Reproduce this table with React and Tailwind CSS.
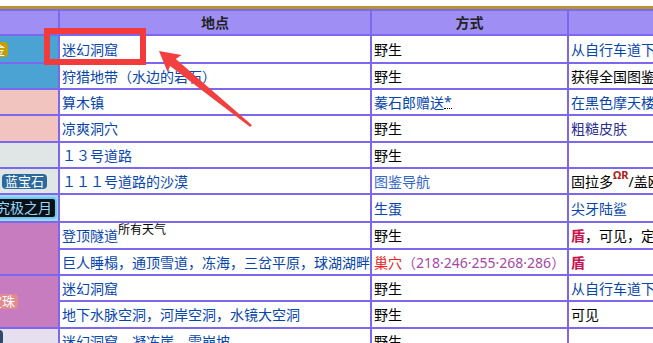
import React from "react";

// link colour used by most cells
const LINK = "text-[#0645ad]";

function Cell({ children, className = "" }) {
  return (
    <div className={`bg-white flex items-center pl-[2px] whitespace-nowrap overflow-hidden ${className}`}>
      {children}
    </div>
  );
}

// first column is cut off on the left, so content is pushed to the right edge and clipped
function Side({ className = "", children }) {
  return (
    <div className={`flex items-center justify-end overflow-hidden whitespace-nowrap ${className}`}>
      {children}
    </div>
  );
}

function Badge({ className = "", children }) {
  return (
    <span className={`shrink-0 rounded-[4px] px-[3px] text-[13px] leading-[15px] ${className}`}>
      {children}
    </span>
  );
}

export default function App() {
  return (
    <div className="relative w-[653px] h-[343px] overflow-hidden bg-white font-['Noto_Sans','Noto_Sans_CJK_SC',sans-serif] text-[14px] text-black">
      <div className="h-[6px]" />
      <div className="h-[3px] bg-[#b8942a]" />

      <div className="grid w-max grid-cols-[58px_310px_195px_220px] grid-rows-[23px_26px_24px_24px_25px_24px_24px_26px_25px_24px_24px_25px_25px] gap-[2px] pt-[2px] bg-[#7b68ee]">
        {/* header */}
        <div className="bg-[#9f8ff4]" />
        <div className="bg-[#9f8ff4] flex items-center justify-center font-bold text-[#222]">地点</div>
        <div className="bg-[#9f8ff4] flex items-center justify-center font-bold text-[#222]">方式</div>
        <div className="bg-[#9f8ff4]" />

        {/* 1 */}
        <Side className="bg-[#4aa3d2] pr-[50px]">
          <Badge className="bg-[#c2a005] text-white">白金</Badge>
        </Side>
        <Cell className={LINK}>迷幻洞窟</Cell>
        <Cell>野生</Cell>
        <Cell className={LINK}>从自行车道下方进入</Cell>

        {/* 2 */}
        <Side className="bg-[#4aa3d2]" />
        <Cell className={LINK}>狩猎地带（水边的岩石）</Cell>
        <Cell>野生</Cell>
        <Cell>获得全国图鉴后</Cell>

        {/* 3 */}
        <Side className="bg-[#f2c4c0]" />
        <Cell className={LINK}>算木镇</Cell>
        <Cell className={LINK}>
          蓁石郎赠送
          <span className="border-b border-dotted border-black leading-[13px]">*</span>
        </Cell>
        <Cell className={LINK}>在黑色摩天楼中</Cell>

        {/* 4 */}
        <Side className="bg-[#f2c4c0]" />
        <Cell className={LINK}>凉爽洞穴</Cell>
        <Cell>野生</Cell>
        <Cell className="text-[#2b2f8f]">粗糙皮肤</Cell>

        {/* 5 */}
        <Side className="bg-[#e0e6e6]" />
        <Cell className={LINK}>１３号道路</Cell>
        <Cell>野生</Cell>
        <Cell />

        {/* 6 */}
        <Side className="bg-[#e0e6e6] pr-[11px]">
          <Badge className="bg-[#2b6a9c] text-white">蓝宝石</Badge>
        </Side>
        <Cell className={LINK}>１１１号道路的沙漠</Cell>
        <Cell className="text-[#3366cc]">图鉴导航</Cell>
        <Cell>
          固拉多
          <sup className="text-[11px] font-bold text-[#b01818] -top-[6px]">ΩR</sup>
          /盖欧卡
        </Cell>

        {/* 7 */}
        <Side className="bg-[#9fd8f2] pr-[1px]">
          <span className="shrink-0 rounded-[4px] border-2 border-[#6ccbf2] bg-[#0d0f16] px-[3px] text-[14px] leading-[18px] text-[#8fd8f8]">
            究极之月
          </span>
        </Side>
        <Cell />
        <Cell className={LINK}>生蛋</Cell>
        <Cell className={LINK}>尖牙陆鲨</Cell>

        {/* 8 + 9 */}
        <Side className="row-span-2 bg-[#c77cc0]" />
        <Cell className={LINK}>
          登顶隧道
          <sup className="text-[12px] text-black -top-[6px]">所有天气</sup>
        </Cell>
        <Cell>野生</Cell>
        <Cell>
          <span className="font-bold text-[#c8144e]">盾</span>，可见，定期出现
        </Cell>

        <Cell className={LINK}>巨人睡榻，通顶雪道，冻海，三岔平原，球湖湖畔</Cell>
        <Cell>
          <span className="text-[#ee2020]">巢穴</span>
          <span className="text-[#a349a4]">（218·246·255·268·286）</span>
        </Cell>
        <Cell>
          <span className="font-bold text-[#c8144e]">盾</span>
        </Cell>

        {/* 10 + 11 */}
        <Side className="row-span-2 bg-[#c77cc0] pr-[40px]">
          <Badge className="bg-[#e38a8f] text-white">宝珠</Badge>
        </Side>
        <Cell className={LINK}>迷幻洞窟</Cell>
        <Cell>野生</Cell>
        <Cell className={LINK}>从自行车道下方进入</Cell>

        <Cell className={LINK}>地下水脉空洞，河岸空洞，水镜大空洞</Cell>
        <Cell>野生</Cell>
        <Cell>可见</Cell>

        {/* 12 */}
        <Side className="bg-[#e6dff0] pr-[55px] items-start pt-[1px]">
          <Badge className="bg-[#2f4a66] text-white">钻石</Badge>
        </Side>
        <Cell className={LINK}>迷幻洞窟，凝冻崖，雪崩坡</Cell>
        <Cell>野生</Cell>
        <Cell />
      </div>

      {/* red annotation box + arrow */}
      <div className="absolute left-[44px] top-[28px] w-[102px] h-[37px] border-[6px] border-[#f43b3b]" />
      <svg className="absolute inset-0 pointer-events-none" width="653" height="343" viewBox="0 0 653 343">
        <polygon
          fill="#f23f3f"
          points="159,51 181.5,55.1 175.8,58.9 251.8,125.1 250.2,126.9 170.1,65.9 167.6,72.1"
        />
      </svg>
    </div>
  );
}
